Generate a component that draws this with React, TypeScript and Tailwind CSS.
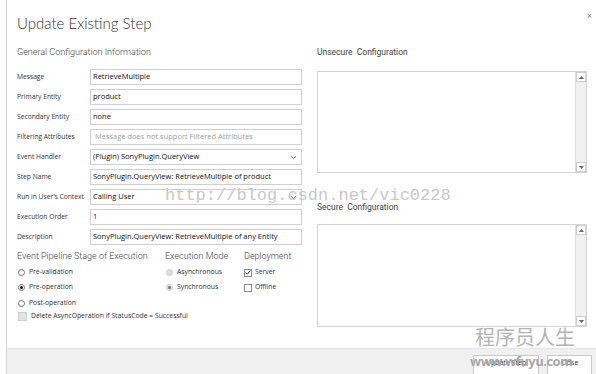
import React from 'react';

const font = { fontFamily: '"Open Sans", "Noto Sans", sans-serif' };
const light = { fontFamily: 'Roboto, "Open Sans", sans-serif' };
const title = { fontFamily: 'Lato, Roboto, sans-serif' };

function Chevron() {
  return (
    <svg width="7" height="5" viewBox="0 0 7 5" className="shrink-0">
      <path d="M0.8 1 L3.5 3.6 L6.2 1" fill="none" stroke="#555" strokeWidth="0.9" />
    </svg>
  );
}

function Field({ label, value, placeholder, select }: { label: string; value?: string; placeholder?: string; select?: boolean }) {
  return (
    <div className="flex items-center h-[16px]">
      <div className="w-[73px] shrink-0 text-[6.7px] text-[#333] whitespace-nowrap">{label}</div>
      <div className="w-[212px] h-[16px] border border-[#cfcfcf] bg-white flex items-center pl-[2px] pr-[4px]">
        {value ? (
          <span className="flex-1 text-[7.5px] text-[#111] whitespace-nowrap">{value}</span>
        ) : (
          <span className="flex-1 pl-[2px] text-[7.5px] text-[#a0a0a0] whitespace-nowrap">{placeholder}</span>
        )}
        {select && <Chevron />}
      </div>
    </div>
  );
}

function Radio({ checked, disabled, label }: { checked?: boolean; disabled?: boolean; label: string }) {
  return (
    <div className="flex items-center gap-[4px]">
      <span
        className={
          disabled
            ? 'w-[7px] h-[7px] rounded-full bg-[#dcdcdc] border border-[#d0d0d0] flex items-center justify-center'
            : 'w-[7px] h-[7px] rounded-full bg-white border border-[#777] flex items-center justify-center'
        }
      >
        {checked && <span className={disabled ? 'w-[3px] h-[3px] rounded-full bg-[#777]' : 'w-[3px] h-[3px] rounded-full bg-[#111]'} />}
      </span>
      <span className="text-[6.8px] text-[#333] whitespace-nowrap">{label}</span>
    </div>
  );
}

function Check({ checked, label }: { checked?: boolean; label: string }) {
  return (
    <div className="flex items-center gap-[3px]">
      <span className="w-[8px] h-[8px] border border-[#888] bg-white flex items-center justify-center">
        {checked && (
          <svg width="7" height="7" viewBox="0 0 7 7">
            <path d="M1 3.6 L2.8 5.4 L6 1.2" fill="none" stroke="#111" strokeWidth="1.1" />
          </svg>
        )}
      </span>
      <span className="text-[6.8px] text-[#333] whitespace-nowrap">{label}</span>
    </div>
  );
}

function Scrollbar() {
  return (
    <div className="w-[11px] h-full border-l border-[#e0e0e0] bg-[#f0f0f0] flex flex-col justify-between">
      <div className="h-[10px] bg-white border border-[#cfcfcf] flex items-center justify-center">
        <svg width="5" height="3" viewBox="0 0 5 3"><path d="M0 3 L2.5 0 L5 3 Z" fill="#666" /></svg>
      </div>
      <div className="h-[10px] bg-white border border-[#cfcfcf] flex items-center justify-center">
        <svg width="5" height="3" viewBox="0 0 5 3"><path d="M0 0 L2.5 3 L5 0 Z" fill="#666" /></svg>
      </div>
    </div>
  );
}

function TextArea({ h }: { h: string }) {
  return (
    <div className={`w-[270px] ${h} border border-[#d4d4d4] bg-white flex justify-end`}>
      <Scrollbar />
    </div>
  );
}

export default function App() {
  return (
    <div className="relative w-[596px] h-[374px] overflow-hidden bg-white" style={font}>
      <div className="ml-[6px] h-full border-l border-[#d6d6d6] flex flex-col">
        {/* Body */}
        <div className="relative flex-1 pl-[10px]">
          <div className="absolute right-[4px] top-[11px] text-[9px] text-[#777] leading-none">×</div>

          <div className="pt-[11px] h-[42px] text-[15px] font-light text-[#333] leading-[24px]" style={title}>
            Update Existing Step
          </div>

          <div className="flex gap-[15px]">
            {/* Left column */}
            <div className="w-[285px] flex flex-col">
              <div className="h-[20px] leading-[20px] text-[9px] font-light text-[#444]" style={light}>
                General Configuration Information
              </div>
              <div className="mt-[7px] flex flex-col gap-[4px]">
                <Field label="Message" value="RetrieveMultiple" />
                <Field label="Primary Entity" value="product" />
                <Field label="Secondary Entity" value="none" />
                <Field label="Filtering Attributes" placeholder="Message does not support Filtered Attributes" />
                <Field label="Event Handler" value="(Plugin) SonyPlugin.QueryView" select />
                <Field label="Step Name" value="SonyPlugin.QueryView: RetrieveMultiple of product" />
                <Field label="Run in User's Context" value="Calling User" select />
                <Field label="Execution Order" value="1" />
                <Field label="Description" value="SonyPlugin.QueryView: RetrieveMultiple of any Entity" />
              </div>

              <div className="mt-[4px] flex">
                <div className="w-[148px] flex flex-col">
                  <div className="h-[14px] leading-[14px] text-[9px] font-light text-[#444] whitespace-nowrap" style={light}>
                    Event Pipeline Stage of Execution
                  </div>
                  <div className="mt-[2px] h-[15px] flex items-center pl-[1px]"><Radio label="Pre-validation" /></div>
                  <div className="h-[15px] flex items-center pl-[1px]"><Radio label="Pre-operation" checked /></div>
                  <div className="mt-[1px] h-[15px] flex items-center pl-[1px]"><Radio label="Post-operation" /></div>
                </div>
                <div className="w-[79px] flex flex-col">
                  <div className="h-[14px] leading-[14px] text-[9px] font-light text-[#444] whitespace-nowrap" style={light}>
                    Execution Mode
                  </div>
                  <div className="mt-[2px] h-[15px] flex items-center pl-[1px]"><Radio label="Asynchronous" disabled /></div>
                  <div className="h-[15px] flex items-center pl-[1px]"><Radio label="Synchronous" disabled checked /></div>
                </div>
                <div className="flex flex-col">
                  <div className="h-[14px] leading-[14px] text-[9px] font-light text-[#444] whitespace-nowrap" style={light}>
                    Deployment
                  </div>
                  <div className="mt-[2px] h-[15px] flex items-center"><Check label="Server" checked /></div>
                  <div className="h-[15px] flex items-center"><Check label="Offline" /></div>
                </div>
              </div>
              <div className="h-[11px] flex items-center gap-[4px] pl-[1px]">
                <span className="w-[9px] h-[9px] bg-[#e3e3e3] border border-[#cfcfcf]" />
                <span className="text-[6.8px] text-[#333] whitespace-nowrap">Delete AsyncOperation if StatusCode = Successful</span>
              </div>
            </div>

            {/* Right column */}
            <div className="w-[270px] flex flex-col">
              <div className="h-[20px] leading-[20px] text-[8.5px] text-[#444] whitespace-pre" style={light}>
                Unsecure  Configuration
              </div>
              <div className="mt-[9px]"><TextArea h="h-[102px]" /></div>
              <div className="mt-[26px] h-[16px] leading-[16px] text-[8.5px] text-[#444] whitespace-pre" style={light}>
                Secure  Configuration
              </div>
              <div className="mt-[9px]"><TextArea h="h-[103px]" /></div>
            </div>
          </div>
        </div>

        {/* Footer */}
        <div className="h-[26px] bg-[#f0f0f0] border-t border-[#e6e6e6] flex justify-end items-start pt-[6px] pr-[4px] gap-[8px]">
          <div className="w-[66px] h-[24px] bg-white border border-[#c8c8c8] flex items-start justify-center pt-[2px] text-[7px] text-[#333]">Update Step</div>
          <div className="w-[45px] h-[24px] bg-white border border-[#c8c8c8] flex items-start justify-center pt-[2px] text-[7px] text-[#333]">Close</div>
        </div>
      </div>

      {/* Watermarks */}
      <div
        className="absolute left-[165px] top-[187px] text-[17px] leading-[17px] text-[#c8c8c8] whitespace-nowrap pointer-events-none"
        style={{ fontFamily: '"Liberation Mono", monospace' }}
      >
        http://blog.csdn.net/vic0228
      </div>
      <div
        className="absolute left-[475px] top-[326px] text-[20px] leading-[22px] text-[#b4b4b4] whitespace-nowrap pointer-events-none"
        style={{ fontFamily: '"Noto Sans CJK SC", sans-serif' }}
      >
        程序员人生
      </div>
      <div className="absolute left-[470px] top-[353px] text-[13px] leading-[16px] font-bold tracking-[-0.5px] text-[#a8a8a8] whitespace-nowrap pointer-events-none">
        www.wfuyu.com
      </div>
    </div>
  );
}
